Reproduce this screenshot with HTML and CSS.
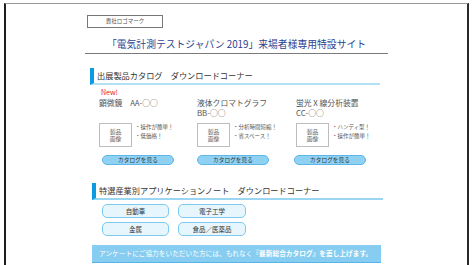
FILE: index.html
```html
<!DOCTYPE html>
<html lang="ja">
<head>
<meta charset="utf-8">
<title>電気計測テストジャパン 2019</title>
<link rel="stylesheet" href="styles.css">
</head>
<body>
<div class="frame">
  <div class="column">
    <div class="logo">貴社ロゴマーク</div>
    <h1 class="title">「電気計測テストジャパン 2019」来場者様専用特設サイト</h1>

    <h2 class="section-head first">出展製品カタログ　ダウンロードコーナー</h2>
    <div class="products">
      <div class="product">
        <div class="badge">New!</div>
        <div class="name">顕微鏡　AA-○○<br>&nbsp;</div>
        <div class="detail">
          <div class="photo">製品<br>画像</div>
          <ul class="points"><li>・操作が簡単！</li><li>・低価格！</li></ul>
        </div>
        <div class="cat-btn">カタログを見る</div>
      </div>
      <div class="product">
        <div class="badge">&nbsp;</div>
        <div class="name">液体クロマトグラフ<br>BB-○○</div>
        <div class="detail">
          <div class="photo">製品<br>画像</div>
          <ul class="points"><li>・分析時間短縮！</li><li>・省スペース！</li></ul>
        </div>
        <div class="cat-btn">カタログを見る</div>
      </div>
      <div class="product">
        <div class="badge">&nbsp;</div>
        <div class="name">蛍光 X 線分析装置<br>CC-○○</div>
        <div class="detail">
          <div class="photo">製品<br>画像</div>
          <ul class="points"><li>・ハンディ型！</li><li>・操作が簡単！</li></ul>
        </div>
        <div class="cat-btn">カタログを見る</div>
      </div>
    </div>

    <h2 class="section-head second">特選産業別アプリケーションノート　ダウンロードコーナー</h2>
    <div class="industries">
      <div class="ind-btn">自動車</div>
      <div class="ind-btn">電子工学</div>
      <div class="ind-btn">金属</div>
      <div class="ind-btn">食品／医薬品</div>
    </div>

    <div class="banner">アンケートにご協力をいただいた方には、もれなく<strong>『最新総合カタログ』を差し上げます。</strong></div>
  </div>
</div>
</body>
</html>
```
FILE: styles.css
```css
html, body {
  margin: 0;
  padding: 0;
  background: #ffffff;
}
body {
  font-family: "Noto Sans CJK JP", "Noto Sans", sans-serif;
  color: #444;
  overflow: hidden;
}
.frame {
  box-sizing: border-box;
  margin-left: 4px;
  margin-top: 3px;
  width: 465px;
  height: 262px;
  overflow: hidden;
  border-top: 1px solid #9a9a9a;
  border-left: 2px solid #1e1e1e;
  border-right: 2px solid #2a2a2a;
  background: #fff;
}
.column {
  width: 303px;
  margin: 0 auto;
  padding-top: 11px;
}
.logo {
  box-sizing: border-box;
  width: 76px;
  height: 13px;
  margin-left: 2px;
  border: 1px solid #777;
  font-size: 5.5px;
  line-height: 11px;
  text-align: center;
  color: #555;
}
.title {
  margin: 9px 0 0;
  height: 16px;
  font-size: 9.8px;
  font-weight: normal;
  line-height: 14px;
  text-align: center;
  color: #2f3f90;
  border-bottom: 1px solid #7a7a7a;
}
.section-head {
  box-sizing: border-box;
  margin: 14px 0 0 5px;
  width: 290px;
  height: 17px;
  padding-left: 3px;
  border-left: 4px solid #0b9be2;
  border-bottom: 2px solid #b2e0f5;
  font-size: 8.2px;
  font-weight: normal;
  line-height: 15px;
  color: #333;
}
.section-head.second {
  margin-top: 18px;
  margin-left: 7px;
  width: 291px;
  border-bottom-color: #9ad6f2;
}
.products {
  display: grid;
  grid-template-columns: 98px 99px 99px;
  margin-left: 14px;
  margin-top: 3px;
}
.badge {
  font-size: 7px;
  line-height: 8px;
  height: 8px;
  color: #e8202a;
  padding-left: 2px;
}
.name {
  margin-top: 2px;
  font-size: 7.8px;
  line-height: 10px;
  color: #555;
  white-space: nowrap;
}
.detail {
  display: flex;
  margin-top: 5px;
  gap: 3px;
}
.photo {
  box-sizing: border-box;
  width: 33px;
  height: 24px;
  border: 1px solid #bdbdbd;
  font-size: 5.8px;
  line-height: 7.5px;
  color: #666;
  display: flex;
  align-items: center;
  justify-content: center;
  text-align: center;
}
.points {
  list-style: none;
  margin: 0;
  padding: 0;
  font-size: 5.5px;
  line-height: 9px;
  color: #555;
}
.cat-btn {
  box-sizing: border-box;
  margin-top: 8px;
  margin-left: 3px;
  width: 72px;
  height: 10px;
  border-radius: 5px;
  background: #8fd1f3;
  border: 1px solid #5cb7e6;
  font-size: 5.7px;
  line-height: 8px;
  text-align: center;
  color: #333;
}
.product:nth-child(2) .cat-btn { margin-left: 0; }
.product:nth-child(3) .cat-btn { margin-left: -2px; }
.industries {
  display: grid;
  grid-template-columns: 67px 68px;
  column-gap: 9px;
  row-gap: 4px;
  margin: 4px 0 0 17px;
}
.ind-btn {
  box-sizing: border-box;
  height: 14px;
  border: 1px solid #7ccaee;
  border-radius: 5px;
  background: #e7f5fc;
  font-size: 6.5px;
  line-height: 12px;
  text-align: center;
  color: #333;
}
.banner {
  box-sizing: border-box;
  margin: 9px 0 0 7px;
  width: 289px;
  height: 18px;
  padding-left: 7px;
  background: #86cdf1;
  border-bottom: 1px solid #56b5e6;
  color: #fff;
  font-size: 6.7px;
  line-height: 17px;
  white-space: nowrap;
}
.banner strong {
  font-weight: bold;
}
```
